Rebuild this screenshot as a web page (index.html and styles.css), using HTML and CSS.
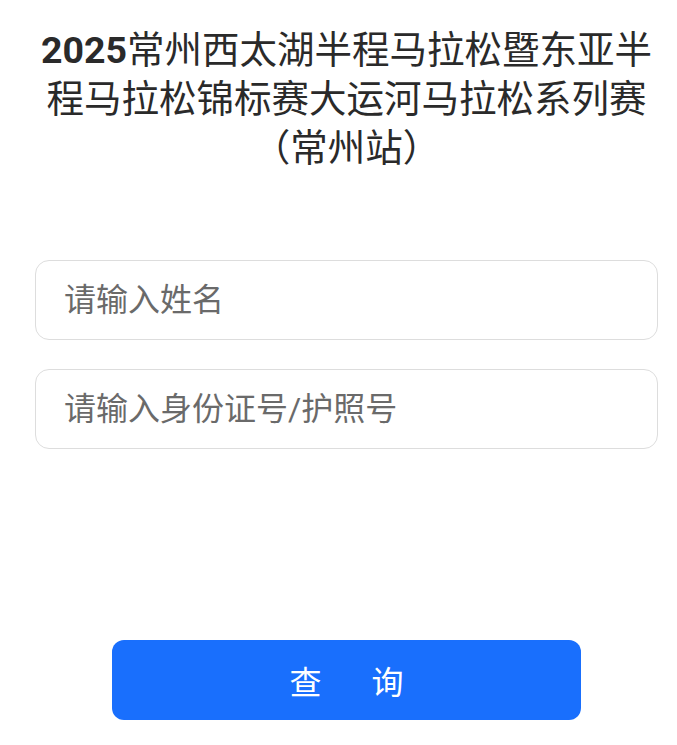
FILE: index.html
```html
<!DOCTYPE html>
<html lang="zh-CN">
<head>
<meta charset="utf-8">
<title>查询</title>
<link rel="stylesheet" href="styles.css">
</head>
<body>
<main class="page">
  <h1 class="title"><span class="year">2025</span><span class="name">常州西太湖半程马拉松暨东亚半程马拉松锦标赛大运河马拉松系列赛（常州站）</span></h1>
  <form class="form" onsubmit="return false">
    <input class="field" type="text" placeholder="请输入姓名">
    <input class="field" type="text" placeholder="请输入身份证号/护照号">
    <button class="btn" type="submit"><span>查</span><span>询</span></button>
  </form>
</main>
</body>
</html>
```
FILE: styles.css
```css
html, body {
  margin: 0;
  padding: 0;
  background: #ffffff;
}
body {
  font-family: Roboto, "Noto Sans CJK SC", sans-serif;
  color: #2b2b2b;
}
.page {
  padding: 26px 19px 0 35px;
  display: flex;
  flex-direction: column;
}
.title {
  margin: 0;
  font-size: 37.5px;
  line-height: 49px;
  font-weight: 400;
  text-align: center;
  color: #2a2a2a;
}
.year {
  font-weight: 700;
}
.form {
  margin-top: 87px;
  display: flex;
  flex-direction: column;
}
.field {
  box-sizing: border-box;
  height: 80px;
  width: 100%;
  border: 1px solid #dddddd;
  border-radius: 14px;
  padding: 0 28px;
  font-family: Roboto, "Noto Sans CJK SC", sans-serif;
  font-size: 32px;
  color: #333;
  background: #fff;
  outline: none;
}
.field + .field {
  margin-top: 29px;
}
.field::placeholder {
  color: #6a6a6a;
}
.btn {
  align-self: center;
  margin-top: 191px;
  width: 469px;
  height: 80px;
  border: none;
  border-radius: 12px;
  background: #196ffd;
  color: #fff;
  font-family: Roboto, "Noto Sans CJK SC", sans-serif;
  font-size: 32px;
  display: flex;
  justify-content: center;
  align-items: center;
  gap: 50px;
  padding: 0;
}
```
